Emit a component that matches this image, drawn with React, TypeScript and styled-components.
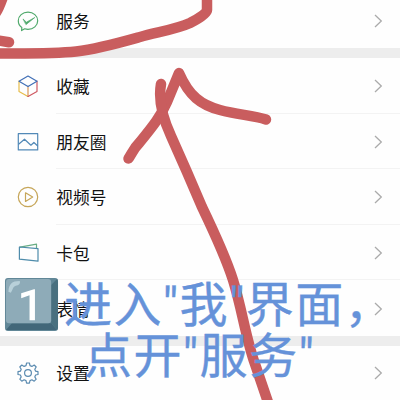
import React from 'react';
import styled, { createGlobalStyle } from 'styled-components';

const GlobalStyle = createGlobalStyle`
  * { box-sizing: border-box; }
  body { margin: 0; background: #fff; }
`;

const Screen = styled.main`
  position: relative;
  width: 400px;
  height: 400px;
  overflow: hidden;
  display: flex;
  flex-direction: column;
  background: #fefefe;
  color: #111;
  font-family: "Noto Sans CJK SC", sans-serif;
`;

const Group = styled.section`
  display: flex;
  flex-direction: column;
  flex: none;
`;

const Gap = styled.div`
  flex: none;
  height: 10px;
  background: #ededed;
`;

const Row = styled.div<{ $height?: number; $lift?: number; $drop?: number }>`
  display: flex;
  align-items: center;
  height: ${p => p.$height ?? 55.6}px;
  padding: ${p => p.$drop ?? 0}px 17px ${p => p.$lift ?? 0}px;
  background: linear-gradient(#f3f3f3, #f3f3f3) 56px 100% / 100% 1px no-repeat;
  &:last-child { background: none; }
`;

const Icon = styled.svg`
  flex: none;
  width: 22px;
  height: 22px;
  fill: none;
  stroke-width: 1.2;
  stroke-linejoin: round;
  stroke-linecap: round;
`;

const Label = styled.span`
  flex: 1;
  margin-left: 17.3px;
  font-size: 16.7px;
  line-height: 24px;
`;

const Chevron = styled.svg`
  flex: none;
  width: 9px;
  height: 14px;
  fill: none;
  stroke: #ababab;
  stroke-width: 1.3;
`;

const Marker = styled.svg`
  position: absolute;
  inset: 0;
  width: 400px;
  height: 400px;
  fill: none;
  stroke: #c95d5e;
  stroke-width: 10.5;
  stroke-linecap: round;
  stroke-linejoin: round;
`;

const Caption = styled.div`
  position: absolute;
  left: 4px;
  top: 276px;
  display: flex;
  flex-direction: column;
  color: #6592d9;
  font-size: 48px;
  line-height: 51px;
  white-space: nowrap;
`;

const CaptionLine = styled.div<{ $indent?: number }>`
  display: flex;
  height: 51px;
  padding-left: ${p => p.$indent ?? 0}px;
  font-family: Roboto, "Noto Sans CJK SC", sans-serif;
  letter-spacing: 1.4px;
  -webkit-text-stroke: 0.4px #6592d9;
`;

const CaptionText = styled.span`
  padding-top: 4px;
`;

const Keycap = styled.svg`
  flex: none;
  width: 55px;
  height: 55px;
  margin: 2px 5px 0 0;
`;

const ServiceIcon = () => (
  <Icon viewBox="0 0 22 22" stroke="#4fa96b">
    <path d="M4.8 17.5C2.4 15.8 1.3 13.3 1.3 10.7 1.3 5.8 5.6 2.2 11 2.2s9.7 3.6 9.7 8.5-4.3 8.6-9.7 8.6c-1.2 0-2.3-.2-3.3-.5L4.6 20.6z" />
    <path d="m6.3 9.2 3.1 3 8.4-4.7-8.6 6.9z" fill="#4fa96b" strokeWidth=".7" />
  </Icon>
);

const CubeIcon = () => (
  <Icon viewBox="0 0 22 22">
    <path d="M2 6.2v10.2l9 5.1" stroke="#e7bd4b" />
    <path d="M11 11.4v10.1" stroke="#d99758" />
    <path d="M20 6.2v10.2l-9 5.1" stroke="#cf5962" />
    <path d="M2 6.2 11 1.1l9 5.1-9 5.2z" stroke="#416fb6" />
  </Icon>
);

const PhotoIcon = () => (
  <Icon viewBox="0 0 22 22" stroke="#5289b7" strokeLinejoin="miter">
    <path d="M1.3 2.7h19.4v16.2H1.3z" />
    <path d="m1.6 13.2 5.9-5 6.4 6 3-2.7 3.6 3.3" />
  </Icon>
);

const PlayIcon = () => (
  <Icon viewBox="0 0 22 22" stroke="#c6a659">
    <circle cx="11" cy="11" r="9.7" />
    <path d="M8.5 6.8v8.6l7.2-4.3z" />
  </Icon>
);

const CardsIcon = () => (
  <Icon viewBox="0 0 22 22">
    <path d="m3 5.200 16.500-3v3.400" stroke="#69ad84" />
    <path d="M2.400 5 21 6.700v12.500L2.400 17.200z" stroke="#4e8cab" />
  </Icon>
);

const FaceIcon = () => (
  <Icon viewBox="0 0 22 22" stroke="#d5aa48">
    <circle cx="11" cy="11" r="9" />
    <path d="M6 12c1 6 9 6 10 0z" />
  </Icon>
);

const GearIcon = () => (
  <Icon viewBox="0 0 22 22" stroke="#5b8bb0">
    <path d="M9 3.6 9.6 1h2.8l.6 2.6 1.9.8 2.3-1.4 2 2-1.4 2.3.8 1.9 2.4.5v2.8l-2.4.5-.8 1.9 1.400 2.300-2 2-2.300-1.400-1.900.8-.6 2.600H9.600L9 18.600l-1.900-.8-2.300 1.400-2-2 1.400-2.300-.8-1.900-2.400-.5V9.700l2.400-.5.8-1.900L2.800 5l2-2 2.300 1.400z" />
    <circle cx="11" cy="11" r="3.400" />
  </Icon>
);

interface ItemProps {
  label: string;
  icon: React.ReactNode;
  height?: number;
  lift?: number;
  drop?: number;
}

const Item = ({ label, icon, height, lift, drop }: ItemProps) => (
  <Row $height={height} $lift={lift} $drop={drop}>
    {icon}
    <Label>{label}</Label>
    <Chevron viewBox="0 0 9 14"><path d="m1 1 6.3 6L1 13" /></Chevron>
  </Row>
);

export default function App() {
  return (
    <>
      <GlobalStyle />
      <Screen>
        <Group>
          <Item label="服务" icon={<ServiceIcon />} height={48} lift={6} />
        </Group>
        <Gap />
        <Group>
          <Item label="收藏" icon={<CubeIcon />} />
          <Item label="朋友圈" icon={<PhotoIcon />} drop={1} />
          <Item label="视频号" icon={<PlayIcon />} drop={1} />
          <Item label="卡包" icon={<CardsIcon />} drop={1} />
          <Item label="表情" icon={<FaceIcon />} drop={2} />
        </Group>
        <Gap />
        <Group>
          <Item label="设置" icon={<GearIcon />} height={55} />
        </Group>

        <Marker viewBox="0 0 400 400">
          <path d="M4-6C1 2-1 9-5 14M-5 40 9 42.200" />
          <path d="M-5 53.500C25 53.300 53 54 76 51.500C98 49 117 43.500 140 37C158 32 177 29 190 23C200 18 207 13 207 10V-8" />
          <path d="M128.500 158.500C132 153 134 148 140 142C153 126 161 116 167 102L179 73C189 96 201 105 220 110C238 115 253 115 266 119.500" />
          <path d="M161 84C158 101 164 121 171 136C180 156 191 181 202 207C214 232 226 258 233 280C242 309 246 339 255 364L270 408" />
        </Marker>

        <Caption>
          <CaptionLine>
            <Keycap viewBox="0 0 56 56">
              <rect x="1" y="0" width="54" height="54" rx="3" fill="#618797" />
              <path d="M2 53 8 46h40l6 7z" fill="#426779" />
              <path d="m48 7 6-6q1 1 1 3v47l-1 2-6-7z" fill="#49707f" />
              <rect x="2" y="1" width="46" height="45" rx="3" fill="#8eabb8" />
              <path d="M4.500 14C5 6 8 3 16 3c1 3-1 4-4 5-3 1-3 4-5 7z" fill="#b8d0d9" />
              <path d="M31.500 43h-5.500V17.500l-8.500 3v-5L30.500 11.500h1z" fill="#fff" />
            </Keycap>
            <CaptionText>进入"我"界面，</CaptionText>
          </CaptionLine>
          <CaptionLine $indent={80}>
            <CaptionText>点开"服务"</CaptionText>
          </CaptionLine>
        </Caption>
      </Screen>
    </>
  );
}
